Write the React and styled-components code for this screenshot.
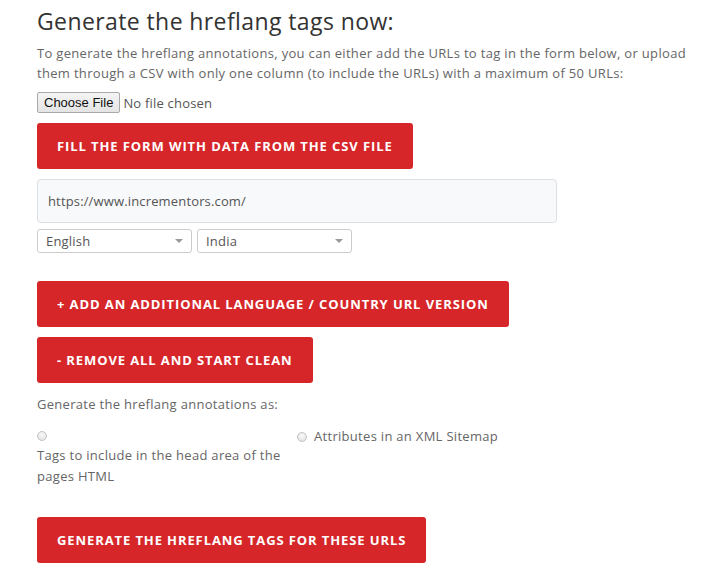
import React from 'react';
import styled, { createGlobalStyle } from 'styled-components';

const GlobalStyle = createGlobalStyle`
  body {
    margin: 0;
    background: #fff;
    font-family: "Open Sans", "Liberation Sans", sans-serif;
  }
`;

const Page = styled.div`
  padding: 6px 37px 0;
  display: flex;
  flex-direction: column;
  align-items: flex-start;
`;

const Title = styled.h2`
  margin: 0;
  font-size: 23px;
  font-weight: 400;
  letter-spacing: 0.4px;
  line-height: 30px;
  color: #333;
`;

const Intro = styled.p`
  margin: 7px 0 0;
  font-size: 13px;
  line-height: 20px;
  letter-spacing: 0.32px;
  white-space: nowrap;
  color: #666;
`;

const FileRow = styled.div`
  margin-top: 9px;
  display: flex;
  align-items: center;
  gap: 3px;
  font-size: 13px;
  letter-spacing: 0.2px;
  color: #555;
`;

const FileButton = styled.span`
  height: 21px;
  box-sizing: border-box;
  padding: 0 6px;
  display: flex;
  align-items: center;
  border: 1px solid #a9a9a9;
  border-radius: 2px;
  background: linear-gradient(#f4f4f4, #e4e4e4);
  font-family: "Liberation Sans", Arial, sans-serif;
  font-size: 13px;
  letter-spacing: 0;
  color: #111;
`;

const RedButton = styled.button`
  margin-top: ${p => p.$top || 10}px;
  height: 46px;
  padding: 0 20px;
  border: none;
  border-radius: 3px;
  background: #d62629;
  color: #fff;
  font-family: "Open Sans", "Liberation Sans", sans-serif;
  font-size: 13px;
  font-weight: 700;
  letter-spacing: 0.9px;
  cursor: pointer;
`;

const UrlInput = styled.div`
  margin-top: 10px;
  width: 520px;
  height: 44px;
  box-sizing: border-box;
  padding: 0 10px;
  display: flex;
  align-items: center;
  border: 1px solid #dcdfe3;
  border-radius: 4px;
  background: #f8f9fb;
  font-size: 13px;
  letter-spacing: 0.15px;
  color: #555;
`;

const SelectRow = styled.div`
  margin-top: 6px;
  display: flex;
  gap: 5px;
`;

const Select = styled.div`
  width: 155px;
  height: 24px;
  box-sizing: border-box;
  padding: 0 8px;
  display: flex;
  align-items: center;
  justify-content: space-between;
  border: 1px solid #ccc;
  border-radius: 3px;
  background: #fff;
  font-size: 13px;
  letter-spacing: 0.2px;
  color: #555;

  &::after {
    content: '';
    border-left: 4px solid transparent;
    border-right: 4px solid transparent;
    border-top: 4px solid #999;
  }
`;

const Label = styled.div`
  margin-top: 11px;
  font-size: 13px;
  line-height: 20px;
  letter-spacing: 0.3px;
  color: #666;
`;

const Options = styled.div`
  margin-top: 12px;
  display: grid;
  grid-template-columns: 260px auto;
  font-size: 13px;
  line-height: 21px;
  letter-spacing: 0.3px;
  color: #666;
  white-space: nowrap;
`;

const Option = styled.label`
  display: block;
`;

const Radio = styled.span`
  display: ${p => (p.$block ? 'block' : 'inline-block')};
  width: 10px;
  height: 10px;
  margin: ${p => (p.$block ? '5px 0 4px' : '0 7px 0 0')};
  border: 1px solid #c4c4c4;
  box-sizing: border-box;
  border-radius: 50%;
  background: radial-gradient(circle at 50% 35%, #fafafa, #dedede);
  vertical-align: -1px;
`;

export default function App() {
  return (
    <>
      <GlobalStyle />
      <Page>
        <Title>Generate the hreflang tags now:</Title>
        <Intro>
          To generate the hreflang annotations, you can either add the URLs to tag in the form below, or upload
          <br />
          them through a CSV with only one column (to include the URLs) with a maximum of 50 URLs:
        </Intro>
        <FileRow>
          <FileButton>Choose File</FileButton>
          <span>No file chosen</span>
        </FileRow>
        <RedButton>FILL THE FORM WITH DATA FROM THE CSV FILE</RedButton>
        <UrlInput>https://www.incrementors.com/</UrlInput>
        <SelectRow>
          <Select>English</Select>
          <Select>India</Select>
        </SelectRow>
        <RedButton $top={28}>+ ADD AN ADDITIONAL LANGUAGE / COUNTRY URL VERSION</RedButton>
        <RedButton>- REMOVE ALL AND START CLEAN</RedButton>
        <Label>Generate the hreflang annotations as:</Label>
        <Options>
          <Option>
            <Radio $block />
            Tags to include in the head area of the
            <br />
            pages HTML
          </Option>
          <Option>
            <Radio />
            Attributes in an XML Sitemap
          </Option>
        </Options>
        <RedButton $top={30}>GENERATE THE HREFLANG TAGS FOR THESE URLS</RedButton>
      </Page>
    </>
  );
}
